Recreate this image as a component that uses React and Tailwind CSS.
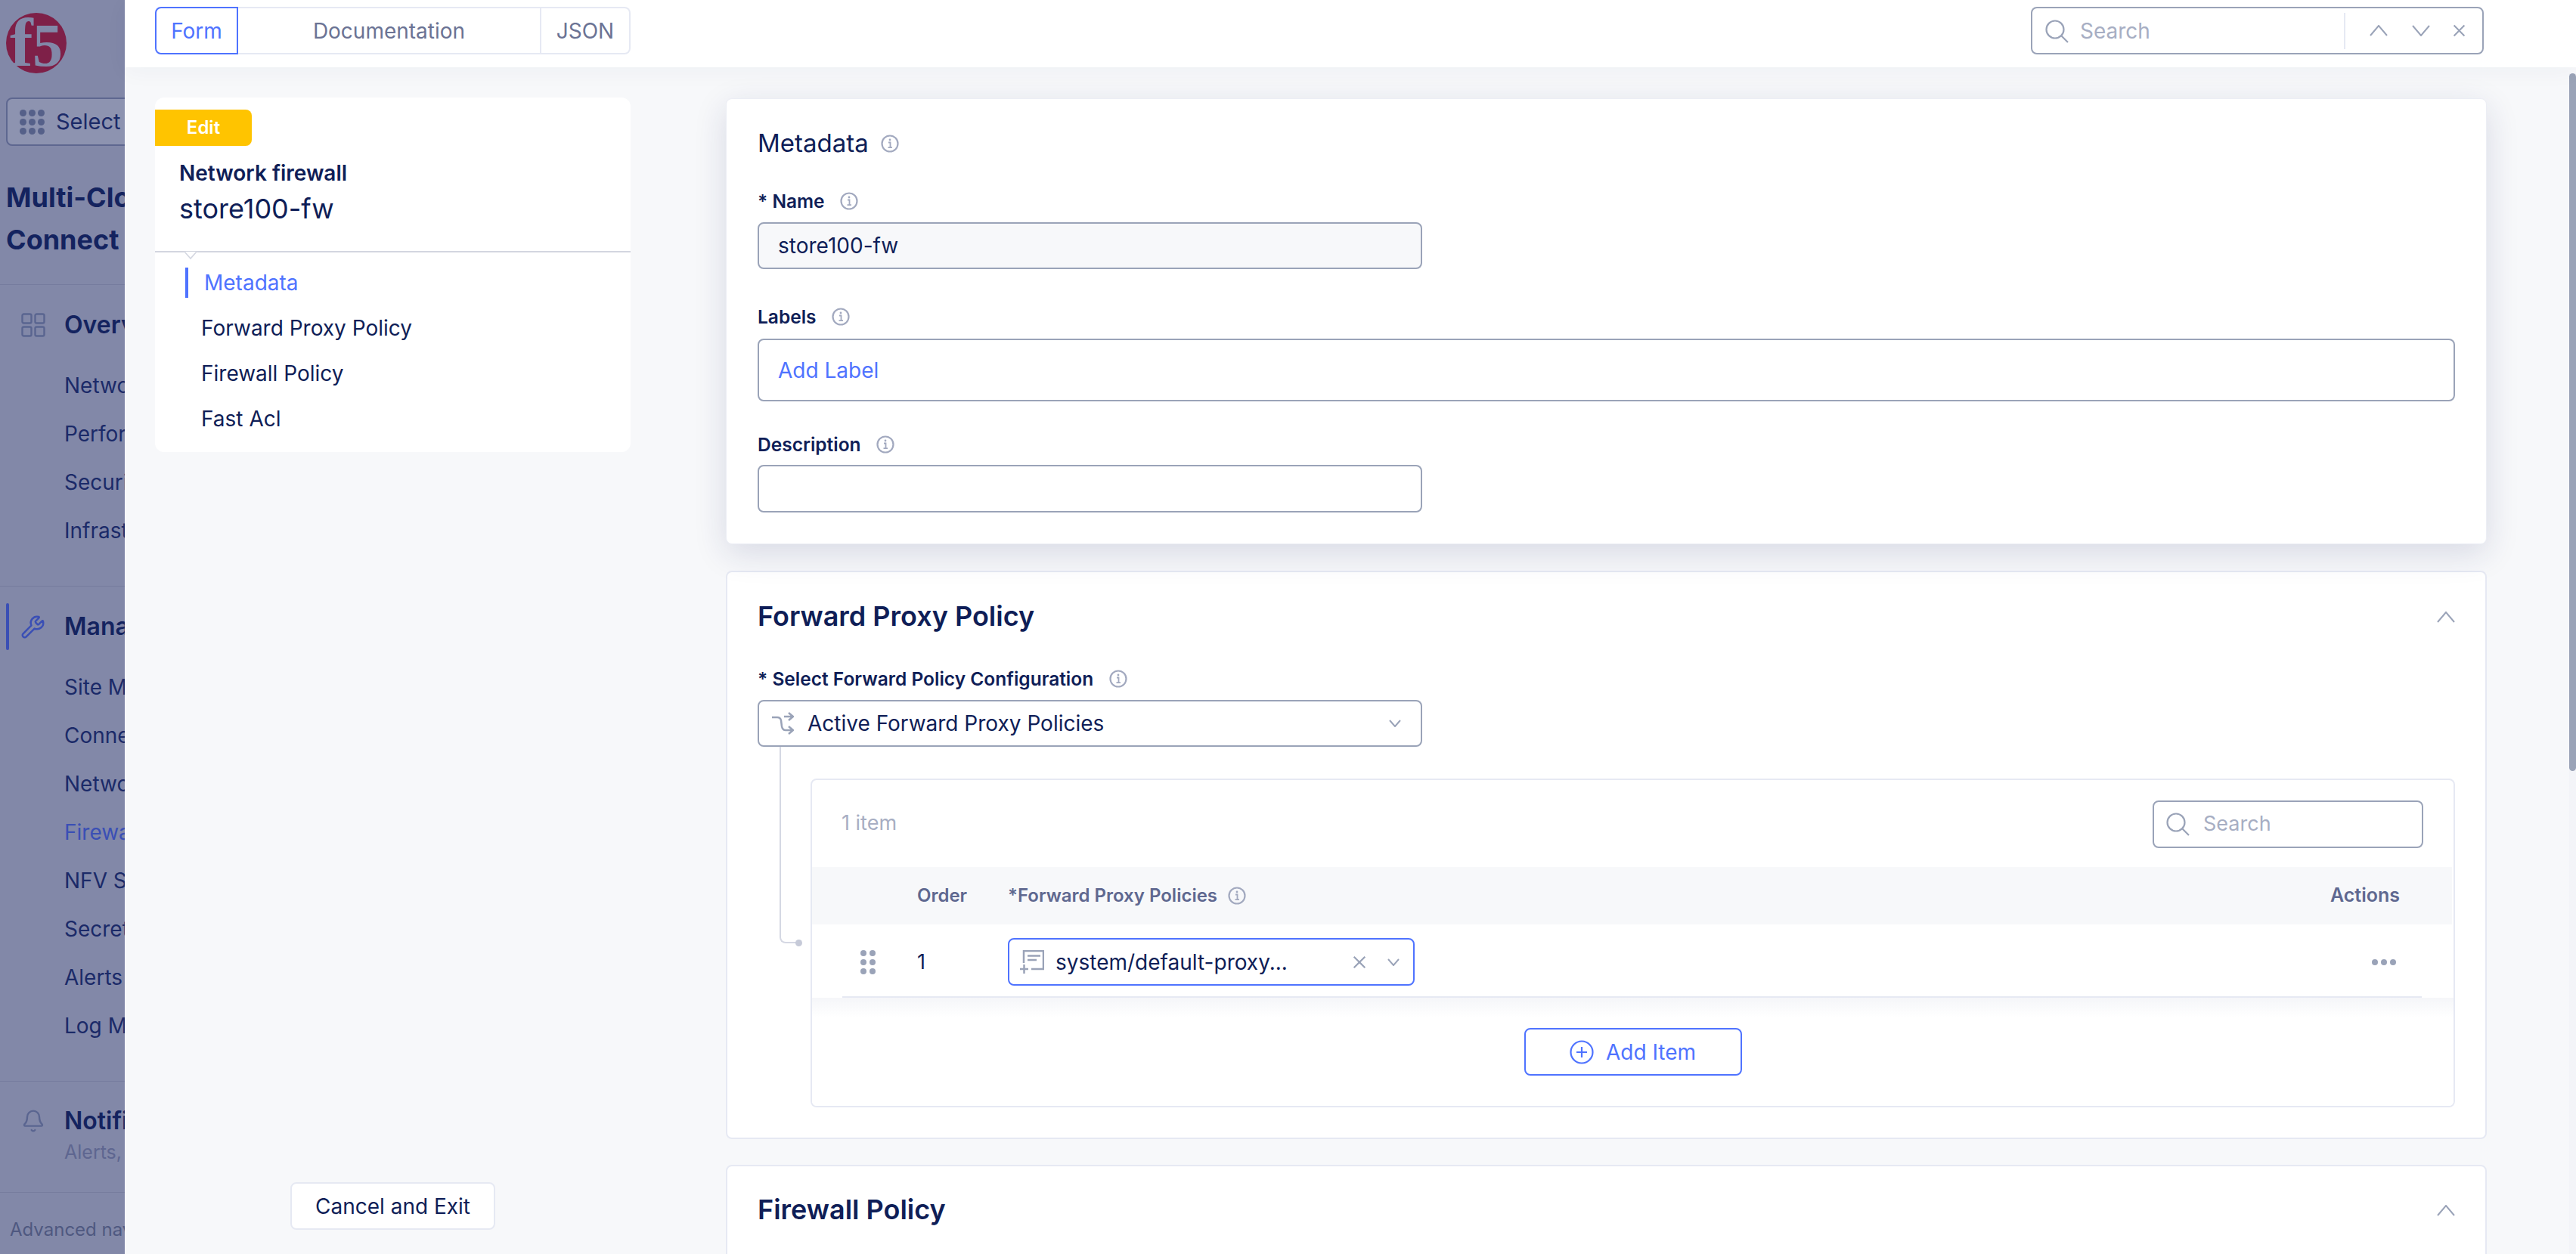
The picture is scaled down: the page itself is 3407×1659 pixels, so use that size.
import React from "react";
import { Wrench, Bell } from "lucide-react";

const Info = ({ className = "" }) => (
  <svg width="24" height="24" viewBox="0 0 24 24" fill="none" className={`shrink-0 ${className}`}>
    <circle cx="12" cy="12" r="10.5" stroke="#a2a9bf" strokeWidth="2.2" />
    <path d="M10 10.5h2.5V17M9.5 17.2h5.5" stroke="#a2a9bf" strokeWidth="1.8" />
    <circle cx="12" cy="7" r="1.4" fill="#a2a9bf" />
  </svg>
);

const Chevron = ({ up = false, w = 14, h = 9, color = "#9aa3b8", sw = 2, className = "" }) => (
  <svg width={w} height={h} viewBox={`0 0 ${w} ${h}`} fill="none" className={`shrink-0 ${className}`}>
    <path d={up ? `M1 ${h - 1}L${w / 2} 1L${w - 1} ${h - 1}` : `M1 1L${w / 2} ${h - 1}L${w - 1} 1`} stroke={color} strokeWidth={sw} />
  </svg>
);

const Cross = ({ s = 16 }) => (
  <svg width={s} height={s} viewBox="0 0 16 16" fill="none" className="shrink-0">
    <path d="M1.5 1.5L14.5 14.5M14.5 1.5L1.5 14.5" stroke="#9aa3b8" strokeWidth="2" />
  </svg>
);

const SearchIcon = ({ s = 32 }) => (
  <svg width={s} height={s} viewBox="0 0 32 32" fill="none" className="shrink-0">
    <circle cx="14" cy="14" r="11.5" stroke="#9aa3b8" strokeWidth="2.2" />
    <path d="M22.5 22.5L31 31" stroke="#9aa3b8" strokeWidth="2.2" />
  </svg>
);

const Dots = ({ cols, rows, gap, d, color, className = "" }) => {
  const w = (cols - 1) * gap + d;
  const h = (rows - 1) * gap + d;
  const list = [];
  for (let r = 0; r < rows; r++)
    for (let c = 0; c < cols; c++)
      list.push(<circle key={`${r}-${c}`} cx={d / 2 + c * gap} cy={d / 2 + r * gap} r={d / 2} fill={color} />);
  return (
    <svg width={w} height={h} viewBox={`0 0 ${w} ${h}`} className={`shrink-0 ${className}`}>
      {list}
    </svg>
  );
};

const Logo = () => (
  <svg width="80" height="80" viewBox="0 0 80 80" className="ml-[8px] shrink-0">
    <circle cx="40" cy="40" r="40" fill="#7e2048" />
    <text x="5" y="70" fontFamily="Liberation Serif, serif" fontWeight="700" fontSize="92" fill="#8288a8">f</text>
    <text x="35" y="70" fontFamily="Liberation Serif, serif" fontWeight="700" fontSize="80" fill="#8288a8">5</text>
  </svg>
);

const SideSub = ({ children, active = false }) => (
  <div className={`h-[64px] flex items-center pl-[85px] whitespace-nowrap text-[28px] ${active ? "text-[#3a4fb5]" : "text-[#1b2a68]"}`}>
    {children}
  </div>
);

const Divider = ({ className = "" }) => <div className={`h-[1px] shrink-0 bg-[#767c9e] ${className}`} />;

const Sidebar = () => (
  <aside className="w-[165px] shrink-0 h-full overflow-hidden bg-[#8288a8] flex flex-col pt-[17px]">
    <Logo />
    <div className="mt-[32px] ml-[8px] w-[300px] h-[64px] shrink-0 rounded-[8px] border-2 border-[#5e6790] flex items-center pl-[16px] gap-[15px] bg-[#8d93b0]">
      <Dots cols={3} rows={3} gap={12} d={9} color="#556089" />
      <span className="text-[29px] text-[#1b2a68] whitespace-nowrap">Select service</span>
    </div>
    <div className="mt-[40px] ml-[8px] text-[36px] leading-[56px] font-bold text-[#14235f] whitespace-nowrap">
      <div>Multi-Cloud Network</div>
      <div>Connect</div>
    </div>
    <Divider className="mt-[31px]" />
    <div className="mt-[21px] h-[64px] flex items-center pl-[28px] gap-[25px] whitespace-nowrap">
      <svg width="32" height="32" viewBox="0 0 32 32" fill="none" stroke="#5a6590" strokeWidth="2.4" className="shrink-0">
        <rect x="1.5" y="1.5" width="12" height="12" rx="2" />
        <rect x="18.5" y="1.5" width="12" height="12" rx="2" />
        <rect x="1.5" y="18.5" width="12" height="12" rx="2" />
        <rect x="18.5" y="18.5" width="12" height="12" rx="2" />
      </svg>
      <span className="text-[32px] font-semibold text-[#14235f]">Overview</span>
    </div>
    <div className="mt-[16px]">
      <SideSub>Networks</SideSub>
      <SideSub>Performance</SideSub>
      <SideSub>Security</SideSub>
      <SideSub>Infrastructure</SideSub>
    </div>
    <Divider className="mt-[41px]" />
    <div className="mt-[22px] h-[62px] flex items-center whitespace-nowrap">
      <div className="w-[4px] h-[62px] ml-[8px] shrink-0 bg-[#3a4fb5] rounded-full" />
      <Wrench size={33} color="#3a4fb5" strokeWidth={1.8} className="ml-[15px] shrink-0" />
      <span className="ml-[25px] text-[32px] font-semibold text-[#14235f]">Manage</span>
    </div>
    <div className="mt-[17px]">
      <SideSub>Site Management</SideSub>
      <SideSub>Connectivity</SideSub>
      <SideSub>Networking</SideSub>
      <SideSub active>Firewall</SideSub>
      <SideSub>NFV Services</SideSub>
      <SideSub>Secrets</SideSub>
      <SideSub>Alerts Management</SideSub>
      <SideSub>Log Management</SideSub>
    </div>
    <Divider className="mt-[41px]" />
    <div className="mt-[30px] h-[44px] flex items-center pl-[28px] gap-[25px] whitespace-nowrap">
      <Bell size={32} color="#5a6590" strokeWidth={1.8} className="shrink-0" />
      <span className="text-[32px] font-semibold text-[#14235f]">Notifications</span>
    </div>
    <div className="h-[40px] flex items-center pl-[85px] text-[25px] text-[#5e6690] whitespace-nowrap">Alerts, Audit logs</div>
    <Divider className="mt-[32px]" />
    <div className="mt-[29px] h-[40px] flex items-center pl-[13px] text-[24px] text-[#4f5880] whitespace-nowrap">Advanced nav options</div>
  </aside>
);

const Header = () => (
  <header className="h-[89px] shrink-0 bg-white flex justify-between items-start pt-[9px] pl-[40px] pr-[122px] relative z-10 shadow-[0_6px_30px_rgba(30,40,90,0.04)]">
    <div className="flex h-[63px] text-[28px] text-[#6b7394]">
      <div className="w-[110px] rounded-l-[8px] border-2 border-[#4f73ff] text-[#4f73ff] flex items-center justify-center">Form</div>
      <div className="w-[401px] border-y-2 border-r-2 border-[#e6e9f3] flex items-center justify-center">Documentation</div>
      <div className="w-[118px] rounded-r-[8px] border-y-2 border-r-2 border-[#e6e9f3] flex items-center justify-center">JSON</div>
    </div>
    <div className="w-[599px] h-[63px] rounded-[8px] border-2 border-[#9aa3b8] flex items-center pl-[16px] pr-[22px]">
      <SearchIcon />
      <span className="ml-[15px] text-[28px] text-[#a7aec3]">Search</span>
      <div className="ml-auto w-[2px] h-[48px] bg-[#e6e9f3]" />
      <div className="ml-[32px]"><Chevron up w={24} h={15} /></div>
      <div className="ml-[32px]"><Chevron w={24} h={15} /></div>
      <div className="ml-[30px]"><Cross s={17} /></div>
    </div>
  </header>
);

const LeftColumn = () => (
  <div className="w-[795px] shrink-0 pl-[40px] pr-[126px] pt-[40px] pb-[32px] flex flex-col">
    <div className="bg-white rounded-[12px] relative">
      <div className="pt-[16px] h-[203px]">
        <div className="w-[128px] h-[48px] bg-[#ffc400] rounded-r-[8px] flex items-center justify-center text-white text-[24px] font-semibold">Edit</div>
        <div className="mt-[18px] ml-[32px] text-[28px] leading-[36px] font-semibold text-[#0f1e57]">Network firewall</div>
        <div className="mt-[6px] ml-[32px] text-[36px] leading-[46px] text-[#0f1e57]">store100-fw</div>
      </div>
      <div className="h-[2px] bg-[#d3d6e0] relative">
        <svg width="18" height="11" viewBox="0 0 18 11" className="absolute left-[38px] top-[1px]">
          <path d="M0 0L9 10L18 0Z" fill="#fff" />
          <path d="M1 0L9 9L17 0" fill="none" stroke="#d3d6e0" strokeWidth="1.5" />
        </svg>
      </div>
      <div className="pt-[20px] pb-[24px]">
        <div className="h-[40px] flex items-center ml-[40px] border-l-4 border-[#4f73ff] pl-[21px] text-[28px] text-[#4f73ff]">Metadata</div>
        <div className="mt-[20px] h-[40px] flex items-center ml-[61px] text-[28px] text-[#0f1e57]">Forward Proxy Policy</div>
        <div className="mt-[20px] h-[40px] flex items-center ml-[61px] text-[28px] text-[#0f1e57]">Firewall Policy</div>
        <div className="mt-[20px] h-[40px] flex items-center ml-[61px] text-[28px] text-[#0f1e57]">Fast Acl</div>
      </div>
    </div>
    <button className="mt-auto self-center w-[271px] h-[63px] bg-white rounded-[8px] border-2 border-[#e6e9f3] text-[28px] text-[#0f1e57]">Cancel and Exit</button>
  </div>
);

const Label = ({ children, className = "", gap = "ml-[20px]" }) => (
  <div className={`h-[30px] pb-[2px] flex items-center text-[24.5px] font-semibold text-[#0f1e57] ${className}`}>
    <span>{children}</span>
    <Info className={gap} />
  </div>
);

const RightColumn = () => (
  <div className="flex-1 min-w-0 pt-[41px] pr-[109px]">
    <section className="bg-white rounded-[8px] border border-[#eceef5] pt-[39px] pb-[41px] pl-[41px] pr-[41px] shadow-[0_12px_44px_rgba(25,35,100,0.14)] relative z-[1]">
      <div className="h-[40px] flex items-center text-[33px] text-[#0f1e57]">
        <span>Metadata</span>
        <Info className="ml-[16px]" />
      </div>
      <Label className="mt-[42px]">* Name</Label>
      <div className="mt-[12px] w-[879px] h-[62px] bg-[#f7f8fa] rounded-[8px] border-2 border-[#9aa3b8] flex items-center pl-[25px] text-[28px] text-[#0f1e57]">store100-fw</div>
      <Label className="mt-[49px]">Labels</Label>
      <div className="mt-[13px] h-[83px] rounded-[8px] border-2 border-[#9aa3b8] flex items-center pl-[25px] text-[28px] text-[#4f73ff]">Add Label</div>
      <Label className="mt-[43px]">Description</Label>
      <div className="mt-[11px] w-[879px] h-[63px] rounded-[8px] border-2 border-[#9aa3b8]" />
    </section>

    <section className="mt-[35px] bg-white rounded-[8px] border-2 border-[#e6e9f3] pt-[37px] pb-[40px] pl-[40px] pr-[40px]">
      <div className="h-[44px] pb-[3px] flex items-center justify-between text-[36px] font-semibold text-[#0f1e57]">
        <span>Forward Proxy Policy</span>
        <Chevron up w={24} h={15} className="mt-[3px]" />
      </div>
      <Label className="mt-[46px]" gap="ml-[21px]">* Select Forward Policy Configuration</Label>
      <div className="relative">
        <div className="mt-[12px] w-[879px] h-[62px] rounded-[8px] border-2 border-[#9aa3b8] flex items-center pl-[17px] pr-[26px] text-[28px] text-[#0f1e57]">
          <svg width="29" height="30" viewBox="0 0 29 30" fill="none" stroke="#9aa3b8" strokeWidth="2.5" className="shrink-0">
            <path d="M0 7H7Q11 7 12 11L13 19Q14 24 18 24H27M16 6H27M22 1L28 6L22 11M22 19L28 24L22 29" />
          </svg>
          <span className="ml-[18px]">Active Forward Proxy Policies</span>
          <div className="ml-auto"><Chevron w={16} h={10} /></div>
        </div>
        <div className="absolute left-[29px] top-[62px] w-[22px] h-[260px] border-l-2 border-b-2 border-[#d5d8e3] rounded-bl-[8px]" />
        <div className="absolute left-[50px] top-[317px] w-[9px] h-[9px] rounded-full bg-[#c6cad8]" />
      </div>
      <div className="mt-[42px] ml-[70px] rounded-[8px] border-2 border-[#e6e9f3] overflow-hidden">
        <div className="h-[115px] flex items-center justify-between pl-[39px] pr-[40px] pt-[1px]">
          <span className="text-[27px] text-[#a7aec3] pb-[2px]">1 item</span>
          <div className="w-[358px] h-[63px] rounded-[8px] border-2 border-[#9aa3b8] flex items-center pl-[15px]">
            <SearchIcon />
            <span className="ml-[18px] text-[27px] text-[#a7aec3]">Search</span>
          </div>
        </div>
        <div className="h-[76px] bg-[#f7f8fa] flex items-center text-[24px] font-semibold text-[#5f6890] mr-[2px]">
          <span className="ml-[139px] w-[120px]">Order</span>
          <span>*Forward Proxy Policies</span>
          <Info className="ml-[14px]" />
          <span className="ml-auto mr-[69px] text-[25px]">Actions</span>
        </div>
        <div className="h-[97px] pt-[2px] flex items-center relative">
          <Dots cols={2} rows={3} gap={12} d={8} color="#9aa3b8" className="ml-[64px]" />
          <span className="ml-[55px] w-[120px] pt-[2px] text-[27px] text-[#0f1e57]">1</span>
          <div className="w-[538px] h-[63px] rounded-[8px] border-2 border-[#4f73ff] flex items-center pl-[14px] pr-[18px] text-[28px] text-[#0f1e57]">
            <svg width="32" height="32" viewBox="0 0 32 32" fill="none" stroke="#9aa3b8" strokeWidth="2.5" className="shrink-0">
              <path d="M5 17V1H31V25H15M10 7.5H27M10 13H22M0 25H11M5.5 19V31" />
            </svg>
            <span className="ml-[15px] whitespace-nowrap">system/default-proxy...</span>
            <div className="ml-auto"><Cross s={18} /></div>
            <div className="ml-[28px]"><Chevron w={16} h={10} /></div>
          </div>
          <Dots cols={3} rows={1} gap={12} d={8} color="#9aa3b8" className="ml-auto mr-[76px]" />
          <div className="absolute left-[40px] right-[42px] bottom-0 h-[2px] bg-[#e6e9f3]" />
        </div>
        <div className="h-[143px] flex items-center justify-center bg-[linear-gradient(#f5f6f9,#ffffff_26px)]">
          <div className="w-[288px] h-[63px] rounded-[8px] border-2 border-[#4f73ff] flex items-center justify-center gap-[16px] text-[28px] text-[#4f73ff]">
            <svg width="32" height="32" viewBox="0 0 32 32" fill="none" stroke="#4f73ff" strokeWidth="2.2" className="shrink-0">
              <circle cx="16" cy="16" r="14.5" />
              <path d="M16 9V23M9 16H23" />
            </svg>
            <span>Add Item</span>
          </div>
        </div>
      </div>
    </section>

    <section className="mt-[34px] bg-white rounded-[8px] border-2 border-[#e6e9f3] pt-[36px] pb-[40px] pl-[40px] pr-[40px] h-[400px]">
      <div className="h-[44px] pb-[3px] flex items-center justify-between text-[36px] font-semibold text-[#0f1e57]">
        <span>Firewall Policy</span>
        <Chevron up w={24} h={15} className="mt-[3px]" />
      </div>
    </section>
  </div>
);

export default function App() {
  return (
    <div className="flex w-full h-[1659px] overflow-hidden bg-[#f7f8fa] font-['Inter',sans-serif]">
      <Sidebar />
      <div className="flex-1 min-w-0 flex flex-col">
        <Header />
        <div className="flex-1 min-h-0 flex overflow-hidden">
          <LeftColumn />
          <RightColumn />
          <div className="w-[9px] shrink-0 bg-[#f3f4f8] mt-[8px]">
            <div className="h-[923px] bg-[#9aa3b7] rounded-full" />
          </div>
        </div>
      </div>
    </div>
  );
}
